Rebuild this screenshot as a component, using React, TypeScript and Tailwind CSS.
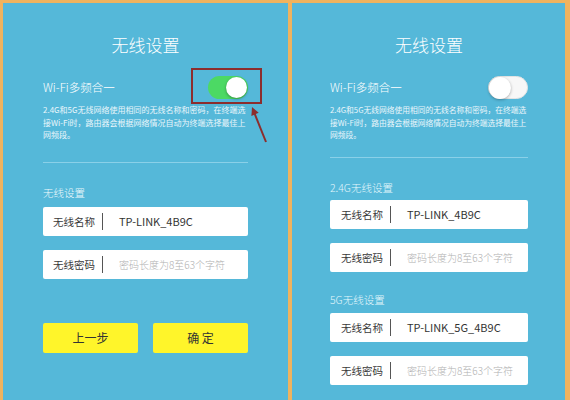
const font = "font-['Noto_Sans_CJK_SC','Noto_Sans',sans-serif] font-light"

function Toggle({ on }: { on: boolean }) {
  if (on) {
    return (
      <div className="w-[40px] h-[23px] rounded-full bg-[#4cd964] flex items-center justify-end p-[1px]">
        <div className="w-[21px] h-[21px] rounded-full bg-white shadow-[0_1px_3px_rgba(0,0,0,0.35)]" />
      </div>
    )
  }
  return (
    <div className="w-[40px] h-[23px] rounded-full bg-[#f7f7f7] border border-[#e3e3e3] flex items-center justify-start">
      <div className="w-[22px] h-[22px] rounded-full bg-white shadow-[0_1px_3px_rgba(0,0,0,0.3)]" />
    </div>
  )
}

function Field({
  label,
  value,
  placeholder,
  wide
}: {
  label: string
  value?: string
  placeholder?: string
  wide?: boolean
}) {
  return (
    <div className={`h-[29px] bg-white rounded-[2px] flex items-center font-normal ${wide ? 'pl-[11px]' : 'pl-[10px]'}`}>
      <span className="w-[42px] text-[10.5px] text-[#3a3a3a] whitespace-nowrap">{label}</span>
      <span className="w-px h-[17px] bg-[#555] ml-[7px]" />
      {value ? (
        <span className="ml-[16px] text-[11px] text-[#333] whitespace-nowrap">{value}</span>
      ) : (
        <span className="ml-[16px] text-[10px] font-light text-[#b0b0b0] whitespace-nowrap">{placeholder}</span>
      )}
    </div>
  )
}

function Header({ on, descSize }: { on: boolean; descSize: string }) {
  return (
    <>
      <div className="pt-[30px] text-center text-white text-[17px] leading-[24px]">无线设置</div>
      <div className="mt-[19px] h-[23px] flex items-center justify-between">
        <span className="text-white text-[11.5px]">Wi-Fi多频合一</span>
        <div className="relative">
          <Toggle on={on} />
          {on && (
            <>
              <div className="absolute left-[-17px] top-[-8px] w-[71px] h-[36px] border-2 border-[#8c2d2d]" />
              <svg className="absolute left-[38px] top-[28px]" width="26" height="40" viewBox="0 0 26 40">
                <line x1="8" y1="8" x2="20" y2="38" stroke="#8c2d2d" strokeWidth="2" />
                <polygon points="6,3 12.7,8.8 5.4,11.9" fill="#8c2d2d" />
              </svg>
            </>
          )}
        </div>
      </div>
      <div className={`mt-[5px] text-[#eaf6fb] font-normal leading-[12.5px] whitespace-nowrap ${descSize}`}>
        <div>2.4G和5G无线网络使用相同的无线名称和密码，在终端选</div>
        <div>接Wi-Fi时，路由器会根据网络情况自动为终端选择最佳上</div>
        <div>网频段。</div>
      </div>
    </>
  )
}

export default function App() {
  return (
    <div className={`${font} w-[570px] h-[400px] overflow-hidden bg-[#f0b35e] flex gap-[4px] pt-[3px] pl-[3px] pr-[5px]`}>
      <div className="w-[285px] shrink-0 h-full bg-[#55b8d9] flex flex-col px-[40px]">
        <Header on descSize="text-[8px]" />
        <div className="mt-[20px] h-px bg-[#8ad0e8]" />
        <div className="mt-[23px] text-[10.5px] leading-[14px] text-[#eef8fc]">无线设置</div>
        <div className="mt-[7.5px]">
          <Field label="无线名称" value="TP-LINK_4B9C" />
        </div>
        <div className="mt-[14px]">
          <Field label="无线密码" placeholder="密码长度为8至63个字符" />
        </div>
        <div className="mt-[44px] flex gap-[15px] font-normal">
          <button className="flex-1 h-[30px] rounded-[2px] bg-[#fff52a] text-[12px] text-[#333]">上一步</button>
          <button className="flex-1 h-[30px] rounded-[2px] bg-[#fff52a] text-[12px] text-[#333]">确 定</button>
        </div>
      </div>
      <div className="flex-1 min-w-0 h-full bg-[#55b8d9] flex flex-col pl-[38px] pr-[37px]">
        <Header on={false} descSize="text-[7.75px]" />
        <div className="mt-[15px] h-px bg-[#8ad0e8]" />
        <div className="mt-[23px] text-[10.5px] leading-[14px] text-[#e4f7fc]">2.4G无线设置</div>
        <div className="mt-[5.5px]">
          <Field wide label="无线名称" value="TP-LINK_4B9C" />
        </div>
        <div className="mt-[14px]">
          <Field wide label="无线密码" placeholder="密码长度为8至63个字符" />
        </div>
        <div className="mt-[21px] text-[10.5px] leading-[14px] text-[#e4f7fc]">5G无线设置</div>
        <div className="mt-[6px]">
          <Field wide label="无线名称" value="TP-LINK_5G_4B9C" />
        </div>
        <div className="mt-[14px]">
          <Field wide label="无线密码" placeholder="密码长度为8至63个字符" />
        </div>
      </div>
    </div>
  )
}
